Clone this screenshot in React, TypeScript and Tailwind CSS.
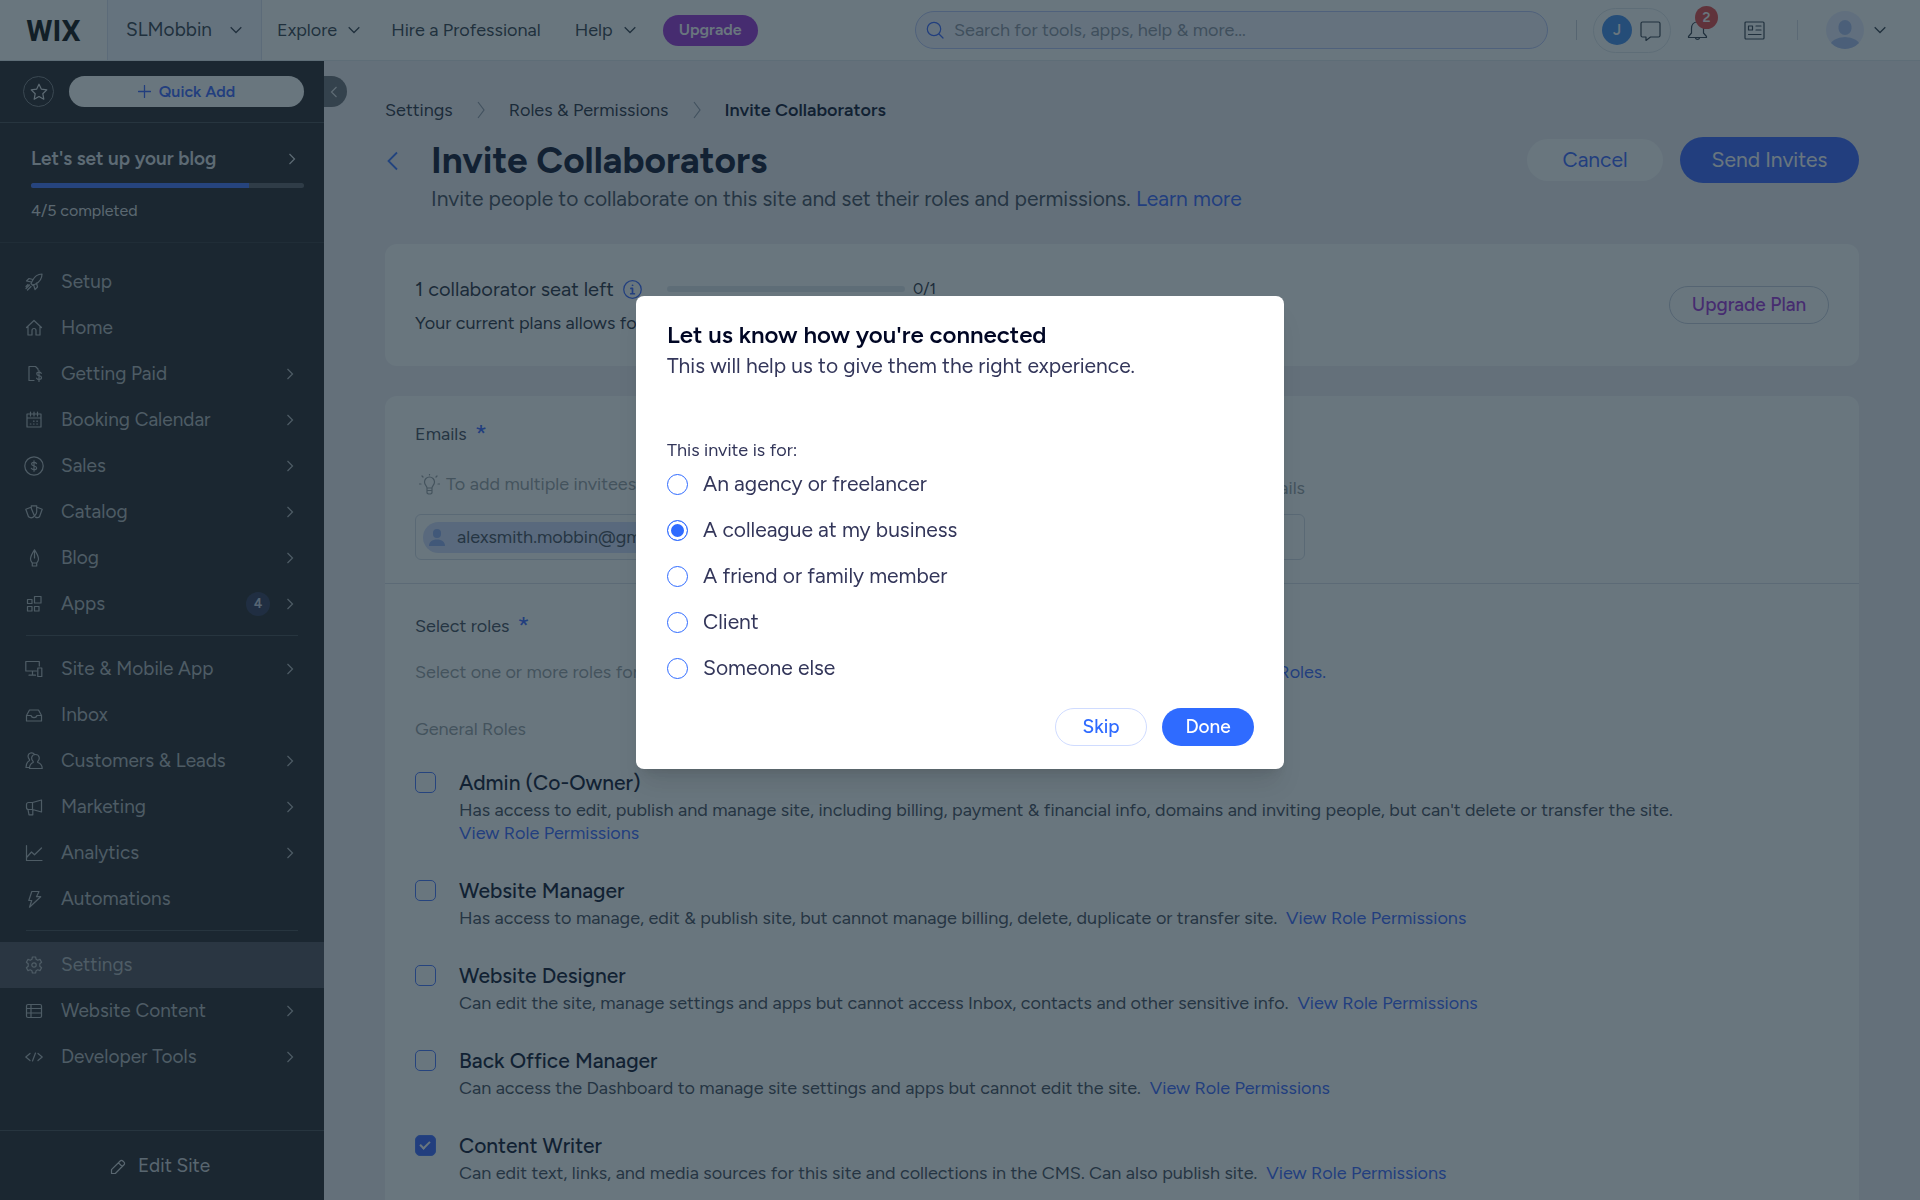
import { useState, type ReactNode } from "react"

type NavItem = { label: string; icon: ReactNode; arrow?: boolean; badge?: number; active?: boolean }

const Icon = ({ children, size = 18, box = 18, className = "" }: { children: ReactNode; size?: number; box?: number; className?: string }) => (
  <svg width={size} height={size} viewBox={`0 0 ${box} ${box}`} fill="none" stroke="currentColor" strokeWidth="1.2" strokeLinecap="round" strokeLinejoin="round" className={`shrink-0 ${className}`} aria-hidden="true">
    {children}
  </svg>
)

const ChevronRight = ({ className = "" }: { className?: string }) => (
  <svg width="8" height="12" viewBox="0 0 8 12" fill="none" stroke="currentColor" strokeWidth="1.2" className={`shrink-0 ${className}`} aria-hidden="true">
    <path d="M1.5 1l5 5-5 5" />
  </svg>
)

const BreadcrumbArrow = () => (
  <svg width="8" height="18" viewBox="0 0 8 18" fill="none" stroke="currentColor" strokeWidth="1.2" className="shrink-0 text-[#8c93a3]" aria-hidden="true">
    <path d="M1 1l6 8-6 8" />
  </svg>
)

const ChevronDown = () => (
  <svg width="12" height="8" viewBox="0 0 12 8" fill="none" stroke="currentColor" strokeWidth="1.3" className="shrink-0" aria-hidden="true">
    <path d="M.7 1.2L6 6.5l5.300-5.300" />
  </svg>
)

const mainNav: NavItem[] = [
  { label: "Setup", icon: <Icon><path d="M17 1c-4 0-7.500 2.500-9.500 6.500L6 10.500 8 12.500l2.500-1.500C14.500 9 17 5.500 17 1zM8 6.500 4 5.500 1.500 8l5 1M11.500 10l1 4L10 16.500l-1.500-5M4.500 12 1 15.500M6 13.500 2.500 17M3 11.500 1 13.500" /></Icon> },
  { label: "Home", icon: <Icon><path d="M1.500 8.500 9 1.500l7.500 7M3 7.500V16h4v-4.500a2 2 0 0 1 4 0V16h4V7.500" /></Icon> },
  { label: "Getting Paid", arrow: true, icon: <Icon><path d="M13 5V4l-2.500-2.500H4v14h5M16.300 8.300c-.6-.9-1.500-1.200-2.300-1.200-1.300 0-2.200.7-2.200 1.800 0 2.400 4.700 1.200 4.700 3.700 0 1.100-1 1.900-2.400 1.900-1 0-2-.4-2.500-1.300M14 5.500v11" /></Icon> },
  { label: "Booking Calendar", arrow: true, icon: <Icon><path d="M2 3h14v13H2zM2 7h14M5.500 1v4M9 1v4M12.500 1v4M8.500 10.200h.6M11.800 10.200h.6M5.300 13h.6M8.500 13h.6M11.800 13h.6" /></Icon> },
  { label: "Sales", arrow: true, icon: <Icon size={20} box={20}><circle cx="10" cy="10" r="9.200" /><path d="M12.500 7.600c-.5-.8-1.400-1.200-2.500-1.200-1.400 0-2.400.6-2.400 1.700 0 2.500 5 1.300 5 3.800 0 1.100-1.100 1.800-2.600 1.800-1.200 0-2.200-.5-2.700-1.400M10 4.800v10.400" /></Icon> },
  { label: "Catalog", arrow: true, icon: <Icon><path d="M6.300 2.800h5.400v6c0 1.800-1 3-2.200 4.200L6.300 5.500zM6 4.200.8 6.200l2.700 7.600c1.800 1.300 4.300 1 6-.8M12 4.200l5.200 2-2.700 7.600c-1.300 1-2.600 1-4 .3" /></Icon> },
  { label: "Blog", arrow: true, icon: <Icon><path d="M9.500.8C7 4.500 5.500 7.500 5.500 10c0 2 .8 3 1.800 4h4.400c1-1 1.800-2 1.800-4 0-2.500-1.500-5.500-4-9.200zM9.500 1v8M7.300 14v3h4.400v-3" /></Icon> },
  { label: "Apps", arrow: true, badge: 4, icon: <Icon><path d="M9.500 1.500H16V8H9.500zM2.500 4.500H7V8.500H2.500zM2.500 11.500H7v4.500H2.500zM9.500 11.500H14v4.500H9.500z" /></Icon> },
]

const siteNav: NavItem[] = [
  { label: "Site & Mobile App", arrow: true, icon: <Icon><path d="M11.500 11H.8V1.500h13.500V6M7.500 11v4M4 15.200h6.500M12.800 8h4v8.500h-4z" /></Icon> },
  { label: "Inbox", icon: <Icon><path d="M1.500 9.500 4.500 4h9l3 5.500V15h-15zM1.500 9.500h4.500c.4 1.400 1.500 2.200 3 2.200s2.600-.8 3-2.200h4.500" /></Icon> },
  { label: "Customers & Leads", arrow: true, icon: <Icon><path d="M8.200 9.500C7 8.500 6.500 7 6.700 5.500 7 3.600 8.800 2.500 10.500 2.500s3.400 1.100 3.700 3c.2 1.500-.3 3-1.500 4v1c2.500.8 4.500 2.500 4.500 6H4.500c0-3.500 1.500-5.200 3.700-6zM9.500 2.300C8.500.9 6.800.6 5.500 1 3.500 1.600 2.800 3.500 3.300 5.300c.2.900.7 1.600 1.200 2.200v1C2.500 9.500 1 11.500 1 15.500h3.500" /></Icon> },
  { label: "Marketing", arrow: true, icon: <Icon><path d="M7.500 4.500 16.500 2v12L7.500 11.500zM7.500 4.500H3.500a2 2 0 0 0-2 2v3a2 2 0 0 0 2 2h4M3 11.500l1 5.300h3.800v-5.200" /></Icon> },
  { label: "Analytics", arrow: true, icon: <Icon><path d="M1.500 1.500v15h15.500M2 13l4.500-5 3 2.800L16.500 4" /></Icon> },
  { label: "Automations", icon: <Icon><path d="M6.800 1.500H14l-2.500 5.200h4.200L4.500 17.200l2.200-6.700H3.800z" /></Icon> },
]

const settingsNav: NavItem[] = [
  { label: "Settings", active: true, icon: <Icon><circle cx="9" cy="9" r="2.200" /><path d="M7.400 1h3.200l.5 2.300 1.600.9 2.300-.8 1.600 2.800-1.800 1.600v2.400l1.800 1.600-1.600 2.800-2.300-.8-1.600.9-.5 2.300H7.400l-.5-2.300-1.600-.9-2.300.8-1.600-2.800 1.800-1.600V7.800L1.400 6.200 3 3.400l2.300.8 1.600-.9z" /></Icon> },
  { label: "Website Content", arrow: true, icon: <Icon><rect x="1.500" y="2.500" width="15" height="13" rx="1.500" /><path d="M1.500 6.500h15M1.500 11h15M6 2.500v13" /></Icon> },
  { label: "Developer Tools", arrow: true, icon: <Icon><path d="M5 5.500.8 9 5 12.500M13 5.500 17.200 9 13 12.500M10.500 5l-3 8" /></Icon> },
]

const roles = [
  { name: "Admin (Co-Owner)", desc: "Has access to edit, publish and manage site, including billing, payment & financial info, domains and inviting people, but can't delete or transfer the site." },
  { name: "Website Manager", desc: "Has access to manage, edit & publish site, but cannot manage billing, delete, duplicate or transfer site." },
  { name: "Website Designer", desc: "Can edit the site, manage settings and apps but cannot access Inbox, contacts and other sensitive info." },
  { name: "Back Office Manager", desc: "Can access the Dashboard to manage site settings and apps but cannot edit the site." },
  { name: "Content Writer", desc: "Can edit text, links, and media sources for this site and collections in the CMS. Can also publish site." },
]

const connections = ["An agency or freelancer", "A colleague at my business", "A friend or family member", "Client", "Someone else"]

const NavList = ({ items }: { items: NavItem[] }) => (
  <ul>
    {items.map((item) => (
      <li key={item.label}>
        <a href="#" className={`flex items-center h-[46px] pl-6 pr-7 text-[19px] ${item.active ? "bg-[#47454f]" : ""}`}>
          <span className="flex justify-center w-5">{item.icon}</span>
          <span className="ml-[17px] flex-1 whitespace-nowrap">{item.label}</span>
          {item.badge && <span className="flex items-center justify-center size-6 mr-4 rounded-full bg-[#292e50] text-[13px] font-bold text-[#c8cede]">{item.badge}</span>}
          {item.arrow && <ChevronRight className="mr-[2px]" />}
        </a>
      </li>
    ))}
  </ul>
)

const Sidebar = () => (
  <aside className="relative flex flex-col w-[324px] shrink-0 bg-[#1c1a1f] text-[#b0b2b7]">
    <div className="flex items-center gap-[15px] h-[62px] pl-[23px] pr-5 border-b border-[#3f4047]">
      <button aria-label="Favorites" className="flex items-center justify-center size-[31px] rounded-full border border-[#75767c] text-[#dddee2]">
        <Icon size={18}><path d="M9 1.200l2.400 5 5.400.7-4 3.800 1 5.500L9 13.500l-4.800 2.700 1-5.500-4-3.800 5.400-.7z" /></Icon>
      </button>
      <button className="flex items-center justify-center gap-2 flex-1 h-[31px] rounded-full bg-white text-[#2f5dff] text-[16px] font-semibold">
        <Icon size={13} box={12}><path d="M6 .5v11M.5 6h11" /></Icon>
        Quick Add
      </button>
    </div>
    <button aria-label="Collapse sidebar" className="absolute left-full top-[15px] flex items-center justify-center w-[23px] h-[31px] pr-1 rounded-r-full bg-[#65676f] text-[#dddee2]">
      <ChevronRight className="rotate-180" />
    </button>
    <div className="h-[120px] pt-[22px] pl-[31px] pr-5 border-b border-[#2b2b31]">
      <a href="#" className="flex items-center justify-between pr-2 text-[19px] leading-7 font-semibold text-[#dddee2]">
        Let's set up your blog
        <ChevronRight />
      </a>
      <div className="mt-[10px] h-[5px] rounded-full bg-[#57575e]">
        <div className="h-full w-4/5 rounded-l-full bg-[#3d6dff]"></div>
      </div>
      <p className="mt-[13px] text-[16px] leading-5 text-[#d5d6da]">4/5 completed</p>
    </div>
    <nav className="pt-4">
      <NavList items={mainNav} />
      <hr className="mt-2 mb-[10px] mx-[26px] border-[#3f4047]" />
      <NavList items={siteNav} />
      <hr className="mt-2 mb-[11px] mx-[26px] border-[#3f4047]" />
      <NavList items={settingsNav} />
    </nav>
    <a href="#" className="flex items-center justify-center gap-3 mt-auto h-[70px] pr-1 pt-[2px] border-t border-[#3f4047] text-[19px] text-[#d0d1d6]">
      <Icon size={16} box={16}><path d="M1.500 14.500v-3.800L10.200 2a1.800 1.800 0 0 1 2.600 0l1.200 1.200a1.800 1.800 0 0 1 0 2.600L5.300 14.500zM8.500 3.800l3.700 3.700" /></Icon>
      Edit Site
    </a>
  </aside>
)

const TopBar = () => (
  <header className="flex items-center h-[61px] shrink-0 bg-white border-b border-[#dfe3eb] text-[18px] text-[#2b3442]">
    <a href="#" aria-label="Wix" className="flex items-center justify-center w-[107px] font-[Roboto] text-[30px] font-bold text-black">WIX</a>
    <button className="flex items-center justify-between w-[155px] h-full pl-[18px] pr-[19px] bg-[#f4f5ff] border-x border-[#dadfef] text-[19px]">
      SLMobbin
      <ChevronDown />
    </button>
    <nav className="flex items-center whitespace-nowrap">
      <button className="flex items-center gap-[11px] ml-[15px]">Explore <ChevronDown /></button>
      <a href="#" className="ml-[31px]">Hire a Professional</a>
      <button className="flex items-center gap-[11px] ml-[34px]">Help <ChevronDown /></button>
      <button className="ml-[27px] w-[95px] h-[31px] rounded-full bg-[#9a27d5] text-[16px] font-semibold text-white">Upgrade</button>
    </nav>
    <label className="flex items-center gap-[10px] ml-auto w-[633px] h-[38px] pl-[10px] rounded-full border border-[#b4c1f8] bg-[#f2f4ff] text-[#2f5dff]">
      <Icon size={18}><circle cx="8" cy="8" r="6.700" /><path d="M13 13l4 4" /></Icon>
      <input type="search" aria-label="Search" placeholder="Search for tools, apps, help & more..." className="flex-1 bg-transparent outline-none placeholder:text-[#868e9d]" />
    </label>
    <div className="flex items-center ml-7">
      <span className="w-px h-5 bg-[#c8cdd8]"></span>
      <button aria-label="Chat" className="flex items-center gap-2 ml-4 w-[78px] h-[45px] pl-2 rounded-full border border-[#dfe5eb]">
        <span className="flex items-center justify-center size-[30px] shrink-0 rounded-full bg-[#3a86ec] text-[15px] font-semibold text-white">J</span>
        <Icon size={21} box={21}><path d="M2.500 2h16a1.500 1.500 0 0 1 1.500 1.500v12a1.500 1.500 0 0 1-1.500 1.500h-8L6 20.500V17H2.500A1.500 1.500 0 0 1 1 15.500v-12A1.500 1.500 0 0 1 2.500 2z" /></Icon>
      </button>
      <button aria-label="Notifications" className="relative ml-4">
        <Icon size={21} box={21}><path d="M10.500 2C6.500 2 4.500 5 4.500 8.500v4.500L1.500 16.500v1h18v-1l-3-3.500V8.500C16.500 5 14.500 2 10.500 2zM8.500 17.500c0 2.500 4 2.500 4 0" /></Icon>
        <span className="absolute -top-[14px] left-2 flex items-center justify-center size-[23px] rounded-full bg-[#e43c3c] text-[14px] font-semibold text-white">2</span>
      </button>
      <button aria-label="News" className="ml-9">
        <Icon size={21} box={21}><rect x="1" y="2" width="19" height="17" rx="1" /><path d="M4.500 6h4v4h-4zM12 6h5M12 10h5M4.500 14.500H17" /></Icon>
      </button>
      <span className="ml-8 w-px h-5 bg-[#d5dae4]"></span>
      <button aria-label="Account" className="flex items-center gap-[10px] ml-7 mr-[34px]">
        <svg width="38" height="38" viewBox="0 0 38 38" aria-hidden="true">
          <clipPath id="avatar"><circle cx="19" cy="19" r="19" /></clipPath>
          <g clipPath="url(#avatar)">
            <rect width="38" height="38" fill="#e6ebff" />
            <rect x="12.500" y="9" width="13" height="15" rx="6.500" fill="#a6bcf0" />
            <ellipse cx="19" cy="35" rx="15" ry="9" fill="#a6bcf0" />
          </g>
        </svg>
        <ChevronDown />
      </button>
    </div>
  </header>
)

const InviteForm = () => {
  const [selected, setSelected] = useState<string[]>(["Content Writer"])

  const toggleRole = (name: string) => {
    setSelected(selected.includes(name) ? selected.filter((r) => r !== name) : [...selected, name])
  }

  return (
    <section className="mt-[30px] pb-10 rounded-xl bg-white text-[18px] text-[#3a4252]">
      <div className="h-[188px] pt-6 px-[30px] border-b border-[#d8dde6]">
        <label htmlFor="emails" className="flex gap-2 leading-7">
          Emails <span className="text-[26px] leading-7 text-[#2f5dff]">*</span>
        </label>
        <div className="flex items-center justify-between mt-[22px] w-[890px] h-7 text-[#93999f]">
          <p className="flex items-center gap-[6px] pl-1">
            <Icon size={21} box={21}><path d="M8 14c0-2-2.500-3-2.500-6a5 5 0 0 1 10 0c0 3-2.500 4-2.500 6zM8 14v4.500c0 2 5 2 5 0V14M8 16.500h5M10.500 0v1M3 2l1 1M18 2l-1 1M0 10h2M19 10h2" /></Icon>
            To add multiple invitees, separate emails with commas
          </p>
          <p className="pt-2">0/50 emails</p>
        </div>
        <div className="flex items-center mt-4 w-[890px] h-[46px] px-[7px] rounded-md border border-[#d3d9e5]">
          <span className="flex items-center gap-[10px] h-[31px] pl-1 pr-3 rounded-full bg-[#cfdafb] text-[#3a4252]">
            <svg width="20" height="20" viewBox="0 0 20 20" fill="#8ba6ef" aria-hidden="true">
              <rect x="6" y="2" width="8" height="9" rx="4" />
              <path d="M2 19c0-4 3-6.500 8-6.500s8 2.500 8 6.500z" />
            </svg>
            alexsmith.mobbin@gmail.com
          </span>
          <input id="emails" type="email" className="flex-1 ml-2 bg-transparent outline-none" />
        </div>
      </div>
      <div className="pt-7 px-[30px]">
        <h2 className="flex gap-2 leading-7">
          Select roles <span className="text-[26px] leading-7 text-[#2f5dff]">*</span>
        </h2>
        <p className="flex justify-between mt-[18px] w-[911px] leading-7 text-[#93999f]">
          Select one or more roles for the people you invite.
          <a href="#" className="text-[#2f5dff]">Manage Roles.</a>
        </p>
        <h3 className="mt-[29px] leading-7 text-[#93999f]">General Roles</h3>
        <ul className="mt-[26px] flex flex-col gap-8">
          {roles.map((role, i) => (
            <li key={role.name} className="flex gap-[23px]">
              <input
                id={`role-${i}`}
                type="checkbox"
                checked={selected.includes(role.name)}
                onChange={() => toggleRole(role.name)}
                className="relative mt-[3px] size-[21px] shrink-0 appearance-none rounded-[5px] border border-[#3d6dff] checked:bg-[#2f5dff] checked:after:absolute checked:after:left-[6px] checked:after:top-[3px] checked:after:h-[10px] checked:after:w-[6px] checked:after:rotate-45 checked:after:border-b-2 checked:after:border-r-2 checked:after:border-white"
              />
              <div>
                <label htmlFor={`role-${i}`} className="block mb-[2px] text-[21px] leading-7 font-medium text-[#000624]">{role.name}</label>
                <p className="leading-[23px]">
                  {role.desc}&nbsp; <a href="#" className="inline-block text-[#2f5dff]">View Role Permissions</a>
                </p>
              </div>
            </li>
          ))}
        </ul>
      </div>
    </section>
  )
}

const ConnectionModal = () => {
  const [connection, setConnection] = useState<string>(connections[1])

  return (
    <div className="fixed inset-0 flex items-start justify-center pt-[296px] bg-[#1c2f3b]/66">
      <div role="dialog" aria-modal="true" aria-labelledby="modal-title" className="w-[648px] rounded-lg bg-white pl-[31px] pr-[30px] pt-6 pb-[23px] text-[#33365a] shadow-xl">
        <h2 id="modal-title" className="text-[24px] leading-[30px] font-semibold text-[#000624]">Let us know how you're connected</h2>
        <p className="text-[21px] leading-8">This will help us to give them the right experience.</p>
        <fieldset className="mt-[54px]">
          <legend className="text-[18px] leading-7">This invite is for:</legend>
          {connections.map((item) => (
            <label key={item} className="flex items-center gap-[15px] h-[46px] text-[21px] first-of-type:-mt-[3px]">
              <input
                type="radio"
                name="connection"
                checked={connection === item}
                onChange={() => setConnection(item)}
                className="size-[21px] appearance-none rounded-full border border-[#2f6bff] checked:bg-[#2f6bff] checked:shadow-[inset_0_0_0_3px_white]"
              />
              {item}
            </label>
          ))}
        </fieldset>
        <div className="flex justify-end gap-[15px] mt-[17px] text-[19px] font-medium">
          <button className="w-[92px] h-[38px] rounded-full border border-[#d0dcff] text-[#2f6bff]">Skip</button>
          <button className="w-[92px] h-[38px] rounded-full bg-[#2f6bff] text-white">Done</button>
        </div>
      </div>
    </div>
  )
}

const App = () => {
  return (
    <div className="flex flex-col h-screen overflow-hidden font-['Figtree','Inter',sans-serif]">
      <TopBar />
      <div className="flex flex-1 min-h-0">
        <Sidebar />
        <main className="flex-1 min-w-0 overflow-hidden bg-[#f0eef4] px-[61px] pt-[35px]">
          <nav className="flex items-center gap-6 text-[18px] leading-7 text-[#1c2536]">
            <a href="#">Settings</a>
            <BreadcrumbArrow />
            <a href="#">Roles & Permissions</a>
            <BreadcrumbArrow />
            <span className="font-semibold text-[#000624]">Invite Collaborators</span>
          </nav>
          <div className="flex items-start mt-[13px]">
            <button aria-label="Back" className="w-[46px] h-12 text-[#2f6bff]">
              <svg width="12" height="20" viewBox="0 0 12 20" fill="none" stroke="currentColor" strokeWidth="1.800" className="ml-[2px]"><path d="M10 1.500L1.500 10l8.500 8.500" /></svg>
            </button>
            <div className="flex-1">
              <h1 className="mb-[2px] text-[37px] leading-[46px] font-bold text-[#000624]">Invite Collaborators</h1>
              <p className="text-[21px] leading-7 text-[#3a4252]">
                Invite people to collaborate on this site and set their roles and permissions. <a href="#" className="text-[#2f5dff]">Learn more</a>
              </p>
            </div>
            <div className="flex items-center gap-[17px] text-[21px]">
              <button className="w-[136px] h-[42px] rounded-full bg-white text-[#2f5dff]">Cancel</button>
              <button className="w-[179px] h-[46px] rounded-full bg-[#2f5dff] text-white">Send Invites</button>
            </div>
          </div>
          <section className="flex items-center justify-between mt-[31px] h-[122px] px-[30px] rounded-xl bg-white">
            <div className="pt-[2px]">
              <div className="flex items-center text-[20px] leading-8 text-[#1c2536]">
                1 collaborator seat left
                <Icon size={19} className="ml-[9px] text-[#2f5dff]"><circle cx="9" cy="9" r="8.300" /><path d="M9 5h.1M7.500 8H9v5M7.300 13h3.500" strokeWidth="1.600" /></Icon>
                <span className="ml-[25px] mr-2 w-[238px] h-[6px] rounded-full bg-[#dfe5eb]"></span>
                <span className="text-[16px]">0/1</span>
              </div>
              <p className="mt-[2px] text-[18px] leading-8 text-[#1c2536]">Your current plans allows for 1 collaborator.</p>
            </div>
            <button className="w-[160px] h-[38px] rounded-full border border-[#c3cbdc] text-[19px] font-medium text-[#9a27d5]">Upgrade Plan</button>
          </section>
          <InviteForm />
        </main>
      </div>
      <ConnectionModal />
    </div>
  )
}

export default App
